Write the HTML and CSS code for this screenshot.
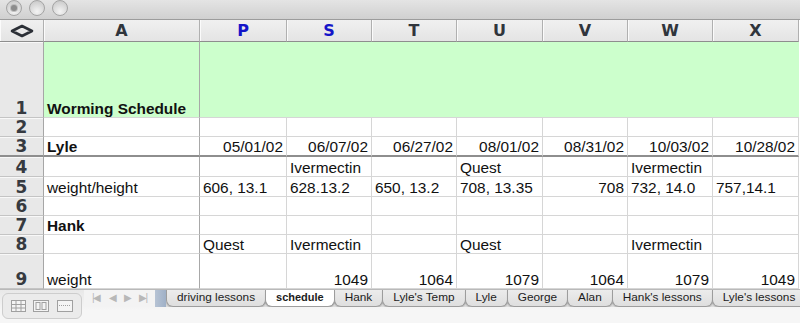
FILE: index.html
```html
<!DOCTYPE html>
<html>
<head>
  <title>schedule</title>
  <link rel="stylesheet" href="styles.css">
</head>
<body>
  <div class="window">
    <div class="titlebar">
      <span class="light active"></span>
      <span class="light"></span>
      <span class="light"></span>
    </div>

    <div class="sheet">
      <!-- column headers -->
      <div class="corner">
        <svg width="24" height="14" viewBox="0 0 24 14"><path d="M2 7 L12 2 L22 7 L12 12 Z" fill="none" stroke="#2b2f36" stroke-width="2.6" stroke-linejoin="round"/></svg>
      </div>
      <div class="colhead">A</div>
      <div class="colhead sel">P</div>
      <div class="colhead sel">S</div>
      <div class="colhead">T</div>
      <div class="colhead">U</div>
      <div class="colhead">V</div>
      <div class="colhead">W</div>
      <div class="colhead">X</div>

      <!-- row 1 -->
      <div class="rowhead">1</div>
      <div class="cell colA green bold">Worming Schedule</div>
      <div class="cell green span8"></div>

      <!-- row 2 -->
      <div class="rowhead">2</div>
      <div class="cell colA"></div>
      <div class="cell"></div><div class="cell"></div><div class="cell"></div><div class="cell"></div>
      <div class="cell"></div><div class="cell"></div><div class="cell"></div>

      <!-- row 3 -->
      <div class="rowhead thick">3</div>
      <div class="cell colA bold thick">Lyle</div>
      <div class="cell num thick">05/01/02</div>
      <div class="cell num thick">06/07/02</div>
      <div class="cell num thick">06/27/02</div>
      <div class="cell num thick">08/01/02</div>
      <div class="cell num thick">08/31/02</div>
      <div class="cell num thick">10/03/02</div>
      <div class="cell num thick">10/28/02</div>

      <!-- row 4 -->
      <div class="rowhead">4</div>
      <div class="cell colA"></div>
      <div class="cell"></div>
      <div class="cell">Ivermectin</div>
      <div class="cell"></div>
      <div class="cell">Quest</div>
      <div class="cell"></div>
      <div class="cell">Ivermectin</div>
      <div class="cell"></div>

      <!-- row 5 -->
      <div class="rowhead">5</div>
      <div class="cell colA">weight/height</div>
      <div class="cell">606, 13.1</div>
      <div class="cell">628.13.2</div>
      <div class="cell">650, 13.2</div>
      <div class="cell">708, 13.35</div>
      <div class="cell num">708</div>
      <div class="cell">732, 14.0</div>
      <div class="cell">757,14.1</div>

      <!-- row 6 -->
      <div class="rowhead">6</div>
      <div class="cell colA"></div>
      <div class="cell"></div><div class="cell"></div><div class="cell"></div><div class="cell"></div>
      <div class="cell"></div><div class="cell"></div><div class="cell"></div>

      <!-- row 7 -->
      <div class="rowhead">7</div>
      <div class="cell colA bold">Hank</div>
      <div class="cell"></div><div class="cell"></div><div class="cell"></div><div class="cell"></div>
      <div class="cell"></div><div class="cell"></div><div class="cell"></div>

      <!-- row 8 -->
      <div class="rowhead">8</div>
      <div class="cell colA"></div>
      <div class="cell">Quest</div>
      <div class="cell">Ivermectin</div>
      <div class="cell"></div>
      <div class="cell">Quest</div>
      <div class="cell"></div>
      <div class="cell">Ivermectin</div>
      <div class="cell"></div>

      <!-- row 9 -->
      <div class="rowhead">9</div>
      <div class="cell colA">weight</div>
      <div class="cell"></div>
      <div class="cell num">1049</div>
      <div class="cell num">1064</div>
      <div class="cell num">1079</div>
      <div class="cell num">1064</div>
      <div class="cell num">1079</div>
      <div class="cell num">1049</div>
    </div>

    <div class="bottom">
      <div class="views">
        <svg width="15" height="12" viewBox="0 0 15 12"><rect x="0.5" y="0.5" width="14" height="11" fill="#f4f4f4" stroke="#a0a0a0"/><path d="M0.5 4.5H14.5M0.5 8H14.5M5 0.5V11.5M10 0.5V11.5" stroke="#a0a0a0"/></svg>
        <svg width="16" height="12" viewBox="0 0 16 12"><rect x="0.5" y="0.5" width="15" height="11" fill="#f4f4f4" stroke="#a0a0a0"/><rect x="3" y="2.5" width="4" height="7" fill="none" stroke="#a0a0a0"/><rect x="9" y="2.5" width="4" height="7" fill="none" stroke="#a0a0a0"/></svg>
        <svg width="16" height="12" viewBox="0 0 16 12"><rect x="0.5" y="0.5" width="15" height="11" fill="#f4f4f4" stroke="#a0a0a0"/><path d="M2 5.5H14" stroke="#a0a0a0" stroke-dasharray="1 1"/></svg>
      </div>
      <div class="tabbar">
        <div class="arrows">
          <span>|◀</span><span>◀</span><span>▶</span><span>▶|</span>
        </div>
        <div class="split"></div>
        <div class="tabs">
          <div class="tab">driving lessons</div>
          <div class="tab current">schedule</div>
          <div class="tab">Hank</div>
          <div class="tab">Lyle's Temp</div>
          <div class="tab">Lyle</div>
          <div class="tab">George</div>
          <div class="tab">Alan</div>
          <div class="tab">Hank's lessons</div>
          <div class="tab">Lyle's lessons</div>
        </div>
      </div>
    </div>
  </div>
</body>
</html>
```
FILE: styles.css
```css
body {
  margin: 0;
  background-color: #f4f4f4;
  font-family: "Liberation Sans", Arial, sans-serif;
  overflow: hidden;
}

.window {
  width: 800px;
  height: 323px;
  position: relative;
}

.titlebar {
  height: 20px;
  box-sizing: border-box;
  background: linear-gradient(#e4e4e4, #d0d0d0);
  border-bottom: 1px solid #9c9c9c;
  display: flex;
  gap: 7px;
  padding-left: 6px;
  align-items: flex-start;
  overflow: hidden;
}

.light {
  width: 16px;
  height: 16px;
  border-radius: 50%;
  box-sizing: border-box;
  border: 1px solid #a4a4a4;
  background: radial-gradient(circle at 50% 75%, #f4f4f4, #cdcdcd 80%);
  display: flex;
  justify-content: center;
  align-items: center;
}

.light.active::after {
  content: "";
  width: 6px;
  height: 6px;
  border-radius: 50%;
  background-color: #8c8c8c;
  box-shadow: 0 0 0 1px #bdbdbd;
}

.sheet {
  display: grid;
  grid-template-columns: 44px 156px 87px 85px 85px 86px 85px 85px 86px;
  grid-template-rows: 22px 76px 19px 20px 20px 20px 19px 19px 19px 35px;
  background-color: #fff;
}

.corner,
.colhead {
  background: linear-gradient(#f0f0f0, #e4e4e4);
  border-bottom: 1px solid #8e8e8e;
  border-right: 1px solid #b0b0b0;
  box-shadow: inset 1px 0 #fbfbfb;
  box-sizing: border-box;
  display: flex;
  justify-content: center;
  align-items: center;
}

.colhead {
  font-family: "DejaVu Sans", sans-serif;
  font-weight: bold;
  font-size: 16px;
  color: #30353c;
}

.colhead.sel {
  color: #1414c8;
}

.rowhead {
  background-color: #e8e8e8;
  border-bottom: 1px solid #c4c4c4;
  border-right: 1px solid #a6a6a6;
  box-shadow: inset 0 1px #f8f8f8;
  box-sizing: border-box;
  font-family: "DejaVu Sans", sans-serif;
  font-weight: bold;
  font-size: 17px;
  line-height: 17px;
  color: #363a40;
  display: flex;
  justify-content: center;
  align-items: flex-end;
}

.cell {
  border-right: 1px solid #d6d6d6;
  border-bottom: 1px solid #d6d6d6;
  box-sizing: border-box;
  font-size: 15.4px;
  line-height: 17px;
  color: #111;
  padding: 0 3px;
  display: flex;
  align-items: flex-end;
  white-space: nowrap;
  overflow: hidden;
}

.colA {
  border-right-color: #a8a8a8;
}

.green {
  background-color: #ccffcc;
}

.span8 {
  grid-column: span 7;
  border-right: none;
}

.bold {
  font-weight: bold;
}

.num {
  justify-content: flex-end;
}

.thick {
  border-bottom: 2px solid #8e8e8e;
}

.bottom {
  height: 34px;
  position: relative;
  background: linear-gradient(#e8e8e8, #f6f6f6 60%);
  border-top: 1px solid #b9b9b9;
}

.views {
  position: absolute;
  left: 2px;
  top: 3px;
  width: 80px;
  height: 26px;
  box-sizing: border-box;
  border: 1px solid #cdcdcd;
  border-radius: 6px;
  background-color: #ebebeb;
  display: flex;
  justify-content: space-around;
  align-items: center;
  padding: 0 4px;
}

.tabbar {
  margin-left: 84px;
  height: 17px;
  display: flex;
  background-color: #d4d4d4;
}

.arrows {
  width: 71px;
  flex-shrink: 0;
  background-color: #f3f3f3;
  display: flex;
  justify-content: center;
  gap: 8px;
  font-size: 10px;
  line-height: 16px;
  color: #b8b8b8;
  letter-spacing: -1px;
}

.split {
  width: 11px;
  flex-shrink: 0;
  background: linear-gradient(90deg, #b6c3d4, #9fb0c7);
}

.tabs {
  display: flex;
  flex: 1;
  background: linear-gradient(#cfcfcf, #dcdcdc);
  overflow: hidden;
}

.tab {
  font-family: "Liberation Sans", sans-serif;
  font-size: 11.8px;
  line-height: 15px;
  height: 16px;
  color: #1c1c1c;
  padding: 0 10px;
  margin-right: -1px;
  background: linear-gradient(#ececec, #dedede);
  border: 1px solid #9d9d9d;
  border-top: none;
  border-radius: 0 0 7px 7px;
  box-shadow: 0 1px 1px rgba(0, 0, 0, 0.18);
  white-space: nowrap;
  flex-shrink: 0;
}

.tab.current {
  background-color: #fff;
  background-image: none;
  font-weight: bold;
  font-size: 11px;
  position: relative;
}
```
